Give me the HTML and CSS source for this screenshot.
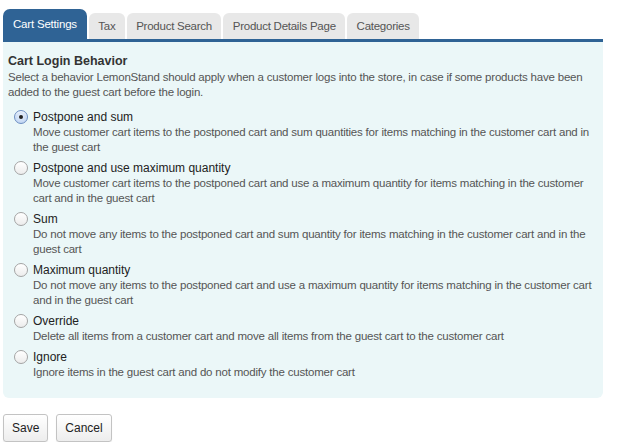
FILE: index.html
```html
<!DOCTYPE html>
<html>
<head>
<meta charset="utf-8">
<link rel="stylesheet" href="styles.css">
</head>
<body>
<div class="page">
  <div class="tabs">
    <div class="tab active">Cart Settings</div>
    <div class="tab">Tax</div>
    <div class="tab">Product Search</div>
    <div class="tab">Product Details Page</div>
    <div class="tab">Categories</div>
  </div>
  <div class="panel">
    <h3 class="title">Cart Login Behavior</h3>
    <p class="intro">Select a behavior LemonStand should apply when a customer logs into the store, in case if some products have been added to the guest cart before the login.</p>
    <div class="options">
      <label class="option">
        <span class="radio checked"></span>
        <span class="body">
          <span class="label">Postpone and sum</span>
          <span class="desc">Move customer cart items to the postponed cart and sum quantities for items matching in the customer cart and in the guest cart</span>
        </span>
      </label>
      <label class="option">
        <span class="radio"></span>
        <span class="body">
          <span class="label">Postpone and use maximum quantity</span>
          <span class="desc">Move customer cart items to the postponed cart and use a maximum quantity for items matching in the customer cart and in the guest cart</span>
        </span>
      </label>
      <label class="option">
        <span class="radio"></span>
        <span class="body">
          <span class="label">Sum</span>
          <span class="desc">Do not move any items to the postponed cart and sum quantity for items matching in the customer cart and in the guest cart</span>
        </span>
      </label>
      <label class="option">
        <span class="radio"></span>
        <span class="body">
          <span class="label">Maximum quantity</span>
          <span class="desc">Do not move any items to the postponed cart and use a maximum quantity for items matching in the customer cart and in the guest cart</span>
        </span>
      </label>
      <label class="option">
        <span class="radio"></span>
        <span class="body">
          <span class="label">Override</span>
          <span class="desc">Delete all items from a customer cart and move all items from the guest cart to the customer cart</span>
        </span>
      </label>
      <label class="option">
        <span class="radio"></span>
        <span class="body">
          <span class="label">Ignore</span>
          <span class="desc">Ignore items in the guest cart and do not modify the customer cart</span>
        </span>
      </label>
    </div>
  </div>
  <div class="actions">
    <button class="btn">Save</button>
    <button class="btn">Cancel</button>
  </div>
</div>
</body>
</html>
```

FILE: styles.css
```css
* { box-sizing: border-box; }
html, body { margin: 0; padding: 0; background: #fff; }
body { font-family: "Liberation Sans", Arial, Helvetica, sans-serif; color: #333; }
.page { padding: 9px 15px 0 3px; width: 618px; }

.tabs { display: flex; align-items: flex-end; gap: 2px; height: 30px; }
.tab {
  height: 26px;
  padding: 0 9.4px;
  background: #e8e8e8;
  color: #555;
  font-size: 11.5px;
  letter-spacing: -0.25px;
  line-height: 26px;
  border-radius: 6px 6px 0 0;
  white-space: nowrap;
}
.tab.active {
  height: 30px;
  line-height: 30px;
  padding: 0 10px;
  letter-spacing: -0.2px;
  background: #2f6395;
  color: #fff;
  border-radius: 7px 7px 0 0;
}

.panel {
  width: 600px;
  background: #ebf7f8;
  border-top: 3px solid #2f6395;
  border-radius: 0 0 6px 6px;
  padding: 11px 5px 18px 5px;
}
.title { margin: 0; font-size: 12.5px; font-weight: bold; color: #333; line-height: 16px; }
.intro { margin: 1px 0 0; font-size: 11.5px; letter-spacing: -0.2px; line-height: 15px; color: #555; }

.options { margin-top: 9px; display: flex; flex-direction: column; gap: 5px; }
.option { display: flex; align-items: flex-start; }
.radio {
  flex: none;
  width: 14px; height: 14px;
  margin: 1px 5px 0 6px;
  border-radius: 50%;
  border: 1px solid #a4a4a4;
  background: linear-gradient(#ffffff, #ececec);
  box-shadow: inset 0 1px 1px rgba(255,255,255,0.8);
  display: flex; align-items: center; justify-content: center;
}
.radio.checked {
  border-color: #6d8fc2;
  background: radial-gradient(circle at 50% 40%, #e9f1fc, #b4cdf0);
}
.radio.checked::after {
  content: "";
  width: 4px; height: 4px; border-radius: 50%;
  background: #222;
}
.body { display: flex; flex-direction: column; }
.label { font-size: 12px; line-height: 16px; color: #222; }
.desc { font-size: 11.5px; letter-spacing: -0.2px; line-height: 15px; color: #555; }

.actions { display: flex; gap: 8px; margin-top: 16px; }
.btn {
  height: 28px;
  padding: 0 8px;
  font-family: "Liberation Sans", Arial, Helvetica, sans-serif;
  font-size: 12px;
  color: #222;
  border: 1px solid #c3c3c3;
  border-radius: 3px;
  background: linear-gradient(#ffffff, #ededed);
  box-shadow: 0 1px 1px rgba(0,0,0,0.08);
}
```
